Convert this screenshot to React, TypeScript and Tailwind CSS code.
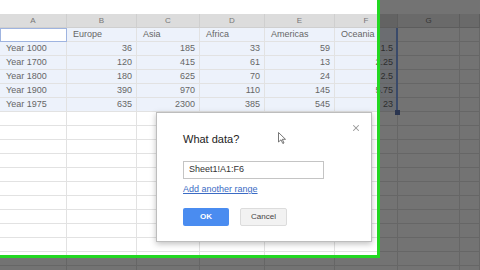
import { X } from "lucide-react";

const colWidths = "grid-cols-[67px_70px_63px_65px_70px_63px_62px_1fr]";
const letters = ["A", "B", "C", "D", "E", "F", "G", ""];

const header = ["", "Europe", "Asia", "Africa", "Americas", "Oceania", "", ""];
const data = [
    ["Year 1000", "36", "185", "33", "59", "1.5"],
    ["Year 1700", "120", "415", "61", "13", "2.25"],
    ["Year 1800", "180", "625", "70", "24", "2.5"],
    ["Year 1900", "390", "970", "110", "145", "5.75"],
    ["Year 1975", "635", "2300", "385", "545", "23"],
];

function Cell({ children, right, sel, active }: { children?: React.ReactNode; right?: boolean; sel?: boolean; active?: boolean }) {
    return (
        <div
            className={
                "h-[14px] border-r border-b border-[#e2e2e2] pr-[4px] text-[9px] leading-[13px] text-[#666] truncate " +
                (right ? "text-right pl-[3px] " : "pl-[6px] ") +
                (active ? "bg-white outline outline-1 outline-[#9fb4e0] -outline-offset-1 " : sel ? "bg-[#edf2fb] " : "bg-white ")
            }
        >
            {children}
        </div>
    );
}

export default function App() {
    return (
        <div className="relative h-[270px] w-[480px] overflow-hidden bg-white font-['Liberation_Sans',Arial,sans-serif]">
            {/* top strip */}
            <div className="h-[14px] bg-white" />

            {/* sheet */}
            <div className={"grid " + colWidths}>
                {letters.map((l, i) => (
                    <div
                        key={"h" + i}
                        className={
                            "flex h-[14px] items-center justify-center border-r border-b border-[#cfcfcf] text-[8px] text-[#777] " +
                            (i < 6 ? "bg-[#dcdcdc]" : "bg-[#ececec]")
                        }
                    >
                        {l}
                    </div>
                ))}
                {header.map((h, i) => (
                    <Cell key={"r0" + i} sel={i < 6} active={i === 0}>
                        {h}
                    </Cell>
                ))}
                {data.map((row, r) =>
                    [...row, "", ""].map((v, i) => (
                        <Cell key={r + "-" + i} right={i > 0} sel={i < 6}>
                            {v}
                        </Cell>
                    ))
                )}
                {Array.from({ length: 12 }).map((_, r) =>
                    letters.map((_, i) => <Cell key={"e" + r + "-" + i} />)
                )}
            </div>

            {/* dimmed area outside the highlight frame */}
            <div className="absolute top-0 left-[380px] h-full w-[100px] bg-[rgba(0,0,0,0.55)]" />
            <div className="absolute top-[258px] left-0 h-[12px] w-[380px] bg-[rgba(0,0,0,0.55)]" />

            {/* selection edge */}
            <div className="absolute top-[28px] left-[396px] h-[84px] w-[2px] bg-[#3a4a6a]" />
            <div className="absolute top-[110px] left-[395px] h-[5px] w-[5px] bg-[#2a3550]" />

            {/* green frame */}
            <div className="absolute -top-[4px] -left-[4px] h-[262px] w-[384px] border-[3px] border-[#22d822]" />

            {/* dialog */}
            <div className="absolute top-[112px] left-[156px] h-[130px] w-[216px] border border-[#bdbdbd] bg-white shadow-[0_2px_6px_rgba(0,0,0,0.25)]">
                <X className="absolute top-[10px] right-[10px] h-[10px] w-[10px] text-[#999]" strokeWidth={2.5} />
                <div className="flex flex-col pt-[19px] pl-[26px]">
                    <div className="text-[11px] leading-[14px] text-[#222]">What data?</div>
                    <div className="mt-[15px] flex h-[18px] w-[141px] items-center border border-[#c4c4c4] px-[5px] text-[9px] text-[#333]">
                        Sheet1!A1:F6
                    </div>
                    <div className="mt-[4px] text-[9px] leading-[12px] text-[#3b6bc4] underline">Add another range</div>
                    <div className="mt-[13px] flex gap-[11px]">
                        <div className="flex h-[18px] w-[46px] items-center justify-center rounded-[2px] bg-[#4a8cf0] text-[8px] font-bold text-white">
                            OK
                        </div>
                        <div className="flex h-[18px] w-[47px] items-center justify-center rounded-[2px] border border-[#dcdcdc] bg-[#f2f2f2] text-[8px] text-[#444]">
                            Cancel
                        </div>
                    </div>
                </div>
            </div>

            {/* mouse cursor */}
            <svg className="absolute top-[132px] left-[278px]" width="8" height="12" viewBox="0 0 8 12">
                <path d="M0.5 0.5 L0.5 10 L3 7.8 L4.8 11.5 L6 11 L4.3 7.3 L7.5 7.3 Z" fill="white" stroke="#555" strokeWidth="0.8" />
            </svg>
        </div>
    );
}
